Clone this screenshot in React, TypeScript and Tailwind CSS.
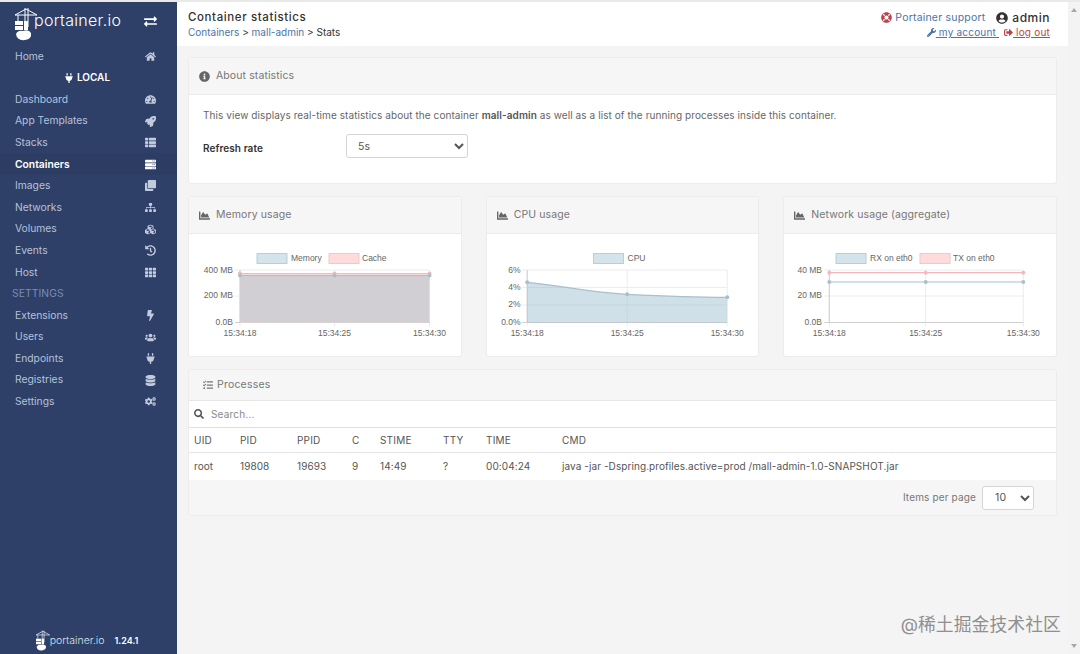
import React from "react";
import {
  FaHome, FaTachometerAlt, FaRocket, FaThList, FaServer, FaClone, FaSitemap, FaCubes, FaHistory, FaTh,
  FaBolt, FaUsers, FaPlug, FaDatabase, FaCogs, FaExchangeAlt, FaInfoCircle, FaChartArea, FaTasks, FaSearch,
  FaLifeRing, FaUserCircle, FaWrench, FaSignOutAlt,
} from "react-icons/fa";

function Logo({ scale = 1 }: { scale?: number }) {
  return (
    <svg width={22 * scale} height={34 * scale} viewBox="0 0 22 34" className="shrink-0">
      <g fill="none" stroke="#fff" strokeWidth="1">
        <path d="M0 8 L11 2 L22 8 Z" />
        <path d="M10 1 V20 M13 1 V20" />
        <path d="M3 8 V14" />
      </g>
      <rect x="0" y="14" width="8" height="4" fill="#fff" />
      <rect x="0" y="19" width="8" height="4" fill="#fff" />
      <rect x="9" y="14" width="4" height="9" fill="#fff" />
      <path d="M1 27 Q3 23 8 24 Q14 22 16 26 Q17 32 10 33 Q2 34 1 27 Z" fill="#fff" />
    </svg>
  );
}

function NavRow({ label, icon, active }: { label: string; icon: React.ReactNode; active?: boolean }) {
  return (
    <div className={`flex h-[21.6px] items-center pl-[15px] ${active ? "bg-[#2c3c63] font-semibold text-white" : "text-[#b7c2da]"}`}>
      <span className="flex-1 text-[10.3px]">{label}</span>
      <span className={`mr-[21px] flex w-[11px] justify-center text-[11px] ${active ? "text-white" : "text-[#c2cbde]"}`}>{icon}</span>
    </div>
  );
}

function Sidebar() {
  return (
    <aside className="flex w-[177px] shrink-0 flex-col bg-[#2e3f68]">
      <div className="flex h-[43.5px] items-center pl-[15px] pt-[1px]">
        <Logo />
        <span className="mb-[9px] ml-[-3px] text-[16px] font-light leading-none tracking-[0.3px] text-white">portainer.io</span>
        <FaExchangeAlt className="mb-[5px] ml-[23px] text-[13px] text-white" />
      </div>
      <NavRow label="Home" icon={<FaHome />} />
      <div className="flex h-[21.6px] items-center justify-center gap-[3px] pr-[3px] text-[10px] font-semibold text-white">
        <FaPlug className="text-[10px]" /> LOCAL
      </div>
      <NavRow label="Dashboard" icon={<FaTachometerAlt />} />
      <NavRow label="App Templates" icon={<FaRocket />} />
      <NavRow label="Stacks" icon={<FaThList />} />
      <NavRow label="Containers" icon={<FaServer />} active />
      <NavRow label="Images" icon={<FaClone />} />
      <NavRow label="Networks" icon={<FaSitemap />} />
      <NavRow label="Volumes" icon={<FaCubes />} />
      <NavRow label="Events" icon={<FaHistory />} />
      <NavRow label="Host" icon={<FaTh />} />
      <div className="flex h-[21.6px] items-center pl-[12px] text-[10.3px] tracking-[0.1px] text-[#7a8db5]">SETTINGS</div>
      <NavRow label="Extensions" icon={<FaBolt />} />
      <NavRow label="Users" icon={<FaUsers />} />
      <NavRow label="Endpoints" icon={<FaPlug />} />
      <NavRow label="Registries" icon={<FaDatabase />} />
      <NavRow label="Settings" icon={<FaCogs />} />
      <div className="mt-auto flex h-[26px] items-center pl-[36px]">
        <Logo scale={0.62} />
        <span className="text-[10.5px] font-light text-[#dfe4ee]">portainer.io</span>
        <span className="ml-[10px] text-[9px] font-semibold text-white">1.24.1</span>
      </div>
    </aside>
  );
}

function Header() {
  return (
    <header className="flex h-[44px] shrink-0 bg-white pl-[11px] pr-[18px]">
      <div className="flex-1 pt-[8px]">
        <div className="text-[11.5px] font-medium leading-[15px] tracking-[0.6px] text-[#333]">Container statistics</div>
        <div className="text-[10px] leading-[15px] text-[#333]">
          <span className="text-[#4d74a8]">Containers</span> &gt; <span className="text-[#4d74a8]">mall-admin</span> &gt; Stats
        </div>
      </div>
      <div className="flex flex-col items-end pt-[8px]">
        <div className="flex h-[15px] items-center text-[10.5px] tracking-[0.2px]">
          <FaLifeRing className="mr-[3px] text-[11px] text-[#b5474b]" />
          <span className="text-[#4d74a8]">Portainer support</span>
          <FaUserCircle className="ml-[11px] mr-[4px] text-[12px] text-[#333]" />
          <span className="text-[12px] font-medium tracking-[0.5px] text-[#333]">admin</span>
        </div>
        <div className="flex h-[15px] items-center text-[10px] tracking-[0.2px]">
          <FaWrench className="text-[9px] text-[#4d74a8]" />
          <span className="text-[#4d74a8] underline">&nbsp;my account&nbsp;</span>
          <FaSignOutAlt className="ml-[5px] text-[9px] text-[#b5474b]" />
          <span className="text-[#b5474b] underline">&nbsp;log out</span>
        </div>
      </div>
    </header>
  );
}

function Widget({ icon, title, children }: { icon: React.ReactNode; title: string; children: React.ReactNode }) {
  return (
    <section className="rounded-[3px] border border-[#ececec] bg-white">
      <div className="flex h-[37px] items-center border-b border-[#ebebeb] bg-[#f6f6f6] pl-[10px] text-[10.5px] tracking-[0.1px] text-[#767676]">
        <span className="mr-[6px] flex text-[11px] text-[#666]">{icon}</span>
        {title}
      </div>
      {children}
    </section>
  );
}

type Series = { stroke: string; fill: string; pts: [number, number][]; area: boolean };

function Chart({
  x0, plot, yLabels, labelRight, legend, series, gridY, xMid,
}: {
  x0: number;
  plot: [number, number, number, number];
  yLabels: [string, number][];
  labelRight: number;
  legend: { box: number; text: number; label: string; fill: string; stroke: string }[];
  series: Series[];
  gridY: number[];
  xMid: number;
}) {
  const [l, t, r, b] = plot;
  const xs = [l, xMid, r];
  const times = ["15:34:18", "15:34:25", "15:34:30"];
  const font = { fontFamily: "'Liberation Sans', Arial, sans-serif", fontSize: 8.5, fill: "#666" };
  return (
    <svg viewBox={`${x0} 234 271 122`} width="100%" height="122" preserveAspectRatio="xMinYMin" className="block">
      {legend.map((g) => (
        <g key={g.label}>
          <rect x={g.box} y={253.5} width={30} height={10} fill={g.fill} stroke={g.stroke} />
          <text x={g.text} y={261} {...font}>{g.label}</text>
        </g>
      ))}
      {gridY.map((y) => <line key={y} x1={l - 5} x2={r} y1={y} y2={y} stroke="#ececec" />)}
      {xs.map((x) => <line key={x} x1={x} x2={x} y1={t} y2={b + 4} stroke="#ececec" />)}
      <line x1={l} x2={l} y1={t} y2={b} stroke="#cfcfcf" />
      <line x1={l - 5} x2={r} y1={b} y2={b} stroke="#cfcfcf" />
      {series.map((s, i) => {
        const [p0, p1, p2] = s.pts;
        const flat = p0[1] === p1[1] && p1[1] === p2[1];
        const line = flat
          ? `M${p0[0]} ${p0[1]} L${p2[0]} ${p2[1]}`
          : `M${p0[0]} ${p0[1]} C${p0[0] + 40} ${p0[1] + 4} ${p1[0] - 40} ${p1[1] - 2} ${p1[0]} ${p1[1]} S${p2[0] - 40} ${p2[1]} ${p2[0]} ${p2[1]}`;
        return (
          <g key={i}>
            {s.area && <path d={`${line} L${r} ${b} L${l} ${b} Z`} fill={s.fill} />}
            <path d={line} fill="none" stroke={s.stroke} strokeWidth="1.2" />
            {s.pts.map((p) => <circle key={p[0]} cx={p[0]} cy={p[1]} r="2" fill={s.stroke} />)}
          </g>
        );
      })}
      {yLabels.map(([txt, y]) => <text key={txt} x={labelRight} y={y + 3} textAnchor="end" {...font}>{txt}</text>)}
      {xs.map((x, i) => <text key={x} x={x} y={336} textAnchor="middle" {...font}>{times[i]}</text>)}
    </svg>
  );
}

const blue = { stroke: "#a7c0d0", fill: "rgba(151,187,205,0.45)" };
const pink = { stroke: "#f5b8b8", fill: "#fbdcdc" };

export default function App() {
  return (
    <div className="relative flex h-[654px] w-[1080px] overflow-hidden border-t-2 border-[#e9e9e9] bg-[#f4f4f4] text-[#555]" style={{ fontFamily: "Inter, 'Noto Sans CJK SC', sans-serif" }}>
      <Sidebar />
      <main className="flex min-w-0 flex-1 flex-col">
        <Header />
        <div className="flex flex-col gap-[12px] pl-[11px] pr-[11px] pt-[11px]">
          <Widget icon={<FaInfoCircle />} title="About statistics">
            <div className="h-[88px] px-[14px] pt-[14px] text-[10px] tracking-[0.08px] text-[#666]">
              <p className="leading-[13px]">
                This view displays real-time statistics about the container <b className="font-semibold text-[#555]">mall-admin</b> as well as a list of the running processes inside this container.
              </p>
              <div className="mt-[12px] flex items-center">
                <label className="w-[143px] pt-[5px] text-[10px] font-semibold text-[#333]">Refresh rate</label>
                <select className="h-[24px] w-[122px] rounded-[3px] border border-[#d5d5d5] bg-white pl-[7px] text-[10.5px] text-[#555]" defaultValue="5s">
                  <option>5s</option>
                  <option>10s</option>
                  <option>30s</option>
                </select>
              </div>
            </div>
          </Widget>
          <div className="grid grid-cols-3 gap-[24px]">
            <Widget icon={<FaChartArea />} title="Memory usage">
              <Chart
                x0={189}
                plot={[240, 270, 429.5, 322.5]}
                xMid={334.5}
                labelRight={233}
                gridY={[270, 296]}
                yLabels={[["400 MB", 270], ["200 MB", 295], ["0.0B", 321.5]]}
                legend={[
                  { box: 257, text: 291, label: "Memory", fill: "#d5e3ea", stroke: "#b6cfdb" },
                  { box: 329, text: 362, label: "Cache", fill: "#ffdcdc", stroke: "#f8c4c4" },
                ]}
                series={[
                  { ...pink, area: true, pts: [[240, 273.5], [334.5, 273.5], [429.5, 273.5]] },
                  { ...blue, fill: "#d2cfd4", area: true, pts: [[240, 275.5], [334.5, 275.5], [429.5, 275.5]] },
                ]}
              />
            </Widget>
            <Widget icon={<FaChartArea />} title="CPU usage">
              <Chart
                x0={486.5}
                plot={[526.7, 270, 726.7, 322.5]}
                xMid={626.7}
                labelRight={520}
                gridY={[270, 287.5, 305]}
                yLabels={[["6%", 270], ["4%", 287], ["2%", 304], ["0.0%", 321.5]]}
                legend={[{ box: 593, text: 627, label: "CPU", fill: "#d5e3ea", stroke: "#b6cfdb" }]}
                series={[{ ...blue, area: true, pts: [[526.7, 282.3], [626.7, 294.3], [726.7, 297.3]] }]}
              />
            </Widget>
            <Widget icon={<FaChartArea />} title="Network usage (aggregate)">
              <Chart
                x0={784}
                plot={[829.3, 270, 1023.3, 322.5]}
                xMid={925.7}
                labelRight={822}
                gridY={[270, 296]}
                yLabels={[["40 MB", 270], ["20 MB", 295], ["0.0B", 321.5]]}
                legend={[
                  { box: 836, text: 870, label: "RX on eth0", fill: "#d5e3ea", stroke: "#b6cfdb" },
                  { box: 920, text: 953, label: "TX on eth0", fill: "#ffdcdc", stroke: "#f8c4c4" },
                ]}
                series={[
                  { ...pink, area: false, pts: [[829.3, 272.7], [925.7, 272.7], [1023.3, 272.7]] },
                  { ...blue, area: false, pts: [[829.3, 282], [925.7, 282], [1023.3, 282]] },
                ]}
              />
            </Widget>
          </div>
          <section className="rounded-[3px] border border-[#ececec] bg-[#f6f6f6]">
            <div className="flex h-[31px] items-center border-b border-[#e6e6e6] pl-[14px] text-[10.5px] tracking-[0.2px] text-[#767676]">
              <FaTasks className="mr-[4px] text-[10px]" /> Processes
            </div>
            <div className="flex h-[27px] items-center border-b border-[#e0e0e0] bg-white pl-[5px] text-[10px] tracking-[0.2px] text-[#8a8a8a]">
              <FaSearch className="mr-[7px] text-[10px] text-[#555]" /> Search...
            </div>
            <div className="grid h-[25px] grid-cols-[46px_57px_55px_28px_63px_43px_76px_1fr] items-center border-b border-[#e4e4e4] bg-white pl-[5px] text-[10px] tracking-[0.2px] text-[#555]">
              {["UID", "PID", "PPID", "C", "STIME", "TTY", "TIME", "CMD"].map((h) => <span key={h}>{h}</span>)}
            </div>
            <div className="grid h-[27px] grid-cols-[46px_57px_55px_28px_63px_43px_76px_1fr] items-center bg-white pl-[5px] text-[10px] tracking-[0.08px] text-[#555]">
              {["root", "19808", "19693", "9", "14:49", "?", "00:04:24", "java -jar -Dspring.profiles.active=prod /mall-admin-1.0-SNAPSHOT.jar"].map((c) => <span key={c}>{c}</span>)}
            </div>
            <div className="flex h-[35px] items-center justify-end pr-[22px] text-[10px] tracking-[0.15px] text-[#777]">
              Items per page
              <select className="ml-[6px] h-[24px] w-[52px] rounded-[3px] border border-[#d5d5d5] bg-white pl-[8px] text-[10.5px] text-[#555]" defaultValue="10">
                <option>10</option>
                <option>25</option>
                <option>50</option>
              </select>
            </div>
          </section>
        </div>
      </main>
      <div className="flex w-[12px] shrink-0 flex-col items-center justify-between bg-[#f3f3f3] py-[6px]">
        <span className="h-0 w-0 border-x-[3px] border-b-[4px] border-x-transparent border-b-[#a8a8a8]" />
        <span className="h-0 w-0 border-x-[3px] border-t-[4px] border-x-transparent border-t-[#a8a8a8]" />
      </div>
      <div className="absolute right-[19px] top-[610px] text-[17.8px] tracking-[0.1px] text-[#8f8f8f]">@稀土掘金技术社区</div>
    </div>
  );
}
